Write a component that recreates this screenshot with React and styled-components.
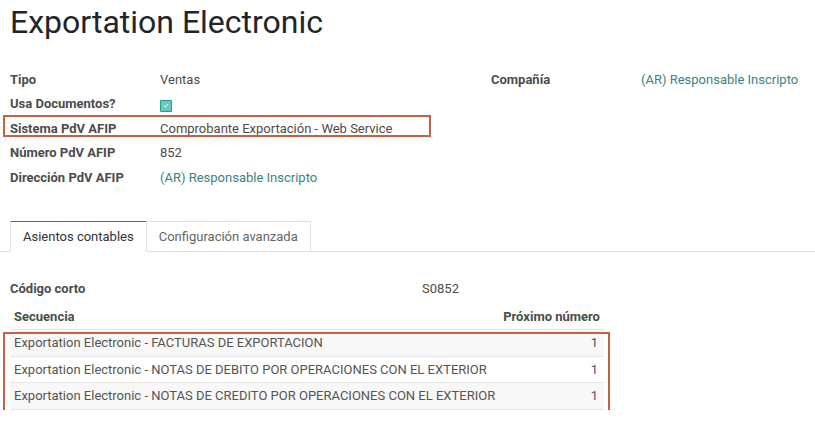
import React from "react";
import styled, { createGlobalStyle } from "styled-components";

const GlobalStyle = createGlobalStyle`
  body {
    margin: 0;
    background: #ffffff;
    font-family: Roboto, "Liberation Sans", sans-serif;
    font-size: 13px;
    color: #4c4c4c;
  }
`;

const Sheet = styled.div`
  padding: 3px 0 0 10px;
`;

const Title = styled.h1`
  margin: 0;
  font-size: 32px;
  line-height: 38px;
  font-weight: 400;
  color: #212529;
`;

const Groups = styled.div`
  display: grid;
  grid-template-columns: 481px 1fr;
  margin-top: 26px;
`;

const Group = styled.div`
  display: flex;
  flex-direction: column;
`;

const FieldRow = styled.div`
  position: relative;
  display: grid;
  grid-template-columns: 150px 1fr;
  align-items: center;
  height: 24.5px;
  white-space: nowrap;

  ${(p) =>
    p.$highlight &&
    `
    &::after {
      content: "";
      position: absolute;
      left: -7px;
      top: -1px;
      width: 428px;
      height: 22px;
      border: 2.5px solid #c8613f;
      box-sizing: border-box;
      pointer-events: none;
    }
  `}
`;

const Label = styled.span`
  font-weight: 700;
  color: #4c4c4c;
`;

const Value = styled.span`
  color: #4c4c4c;
`;

const Link = styled.a`
  color: #3b8288;
  text-decoration: none;
`;

const Check = styled.span`
  display: inline-flex;
  align-items: center;
  justify-content: center;
  width: 12px;
  height: 12px;
  box-sizing: border-box;
  background: #6cc7bf;
  border: 1px solid #21a08f;
  border-radius: 1px;
`;

const Tabs = styled.div`
  display: flex;
  margin: 31.5px 0 0 -10px;
  padding-left: 10px;
  border-bottom: 1px solid #dee2e6;
`;

const Tab = styled.div`
  height: 31px;
  display: flex;
  align-items: center;
  padding: 0 12px;
  box-sizing: border-box;
  margin-bottom: -1px;
  border: 1px solid #dee2e6;
  border-top-color: ${(p) => (p.$active ? "#6a5f6a" : "#dee2e6")};
  border-bottom-color: ${(p) => (p.$active ? "#ffffff" : "#dee2e6")};
  background: #ffffff;
  color: ${(p) => (p.$active ? "#333333" : "#666666")};
  white-space: nowrap;
  & + & {
    margin-left: -1px;
  }
`;

const TabBody = styled.div`
  padding-top: 24px;
`;

const ShortCode = styled.div`
  display: grid;
  grid-template-columns: 412px 1fr;
  align-items: center;
  height: 24px;
`;

const TableWrap = styled.div`
  position: relative;
  width: 593px;
  margin-top: 4px;
`;

const Marker = styled.div`
  position: absolute;
  left: -7px;
  right: -7px;
  top: 28px;
  bottom: -4px;
  border: 2.5px solid #c8613f;
  pointer-events: none;
`;

const Table = styled.table`
  width: 100%;
  border-collapse: collapse;
  white-space: nowrap;
`;

const Th = styled.th`
  height: 25px;
  padding: 0 4px;
  font-weight: 700;
  color: #4c4c4c;
  text-align: ${(p) => (p.$right ? "right" : "left")};
  border-bottom: 1px solid #e6e6e6;
`;

const Row = styled.tr`
  background: ${(p) => (p.$odd ? "#f8f8f8" : "#ffffff")};
  border-bottom: 1px solid #e6e6e6;
`;

const Td = styled.td`
  height: 25.5px;
  padding: 0 ${(p) => (p.$right ? "6px" : "4px")} 0 4px;
  color: #555555;
  text-align: ${(p) => (p.$right ? "right" : "left")};
`;

const sequences = [
  "Exportation Electronic - FACTURAS DE EXPORTACION",
  "Exportation Electronic - NOTAS DE DEBITO POR OPERACIONES CON EL EXTERIOR",
  "Exportation Electronic - NOTAS DE CREDITO POR OPERACIONES CON EL EXTERIOR",
];

export default function App() {
  return (
    <>
      <GlobalStyle />
      <Sheet>
        <Title>Exportation Electronic</Title>

        <Groups>
          <Group>
            <FieldRow>
              <Label>Tipo</Label>
              <Value>Ventas</Value>
            </FieldRow>
            <FieldRow>
              <Label>Usa Documentos?</Label>
              <Value>
                <Check>
                  <svg width="6" height="5" viewBox="0 0 6 5">
                    <path d="M0.8 2.6 L2.3 3.9 L5.2 1" fill="none" stroke="#ffffff" strokeWidth="1" />
                  </svg>
                </Check>
              </Value>
            </FieldRow>
            <FieldRow $highlight>
              <Label>Sistema PdV AFIP</Label>
              <Value>Comprobante Exportación - Web Service</Value>
            </FieldRow>
            <FieldRow>
              <Label>Número PdV AFIP</Label>
              <Value>852</Value>
            </FieldRow>
            <FieldRow>
              <Label>Dirección PdV AFIP</Label>
              <Link href="#">(AR) Responsable Inscripto</Link>
            </FieldRow>
          </Group>
          <Group>
            <FieldRow>
              <Label>Compañía</Label>
              <Link href="#">(AR) Responsable Inscripto</Link>
            </FieldRow>
          </Group>
        </Groups>

        <Tabs>
          <Tab $active>Asientos contables</Tab>
          <Tab>Configuración avanzada</Tab>
        </Tabs>

        <TabBody>
          <ShortCode>
            <Label>Código corto</Label>
            <Value>S0852</Value>
          </ShortCode>

          <TableWrap>
            <Table>
              <thead>
                <tr>
                  <Th>Secuencia</Th>
                  <Th $right>Próximo número</Th>
                </tr>
              </thead>
              <tbody>
                {sequences.map((name, i) => (
                  <Row key={name} $odd={i % 2 === 0}>
                    <Td>{name}</Td>
                    <Td $right>1</Td>
                  </Row>
                ))}
              </tbody>
            </Table>
            <Marker />
          </TableWrap>
        </TabBody>
      </Sheet>
    </>
  );
}
